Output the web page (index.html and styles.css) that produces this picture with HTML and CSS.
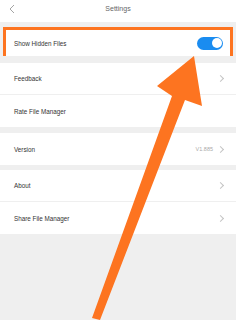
FILE: index.html
```html
<!DOCTYPE html>
<html>
<head>
<meta charset="utf-8">
<link rel="stylesheet" href="styles.css">
</head>
<body>
<div class="page">
  <header class="topbar">
    <svg class="back" width="6" height="10" viewBox="0 0 6 10"><path d="M5 1 L1 5 L5 9" fill="none" stroke="#9a9a9a" stroke-width="0.9"/></svg>
    <span class="title">Settings</span>
  </header>

  <section class="group first">
    <div class="row highlight">
      <span class="label">Show Hidden Files</span>
      <span class="toggle"><span class="knob"></span></span>
    </div>
  </section>

  <section class="group">
    <div class="row">
      <span class="label">Feedback</span>
      <span class="chev"></span>
    </div>
    <div class="row">
      <span class="label">Rate File Manager</span>
    </div>
  </section>

  <section class="group wide-gap">
    <div class="row">
      <span class="label">Version</span>
      <span class="right"><span class="value">V1.885</span><span class="chev"></span></span>
    </div>
  </section>

  <section class="group">
    <div class="row">
      <span class="label">About</span>
      <span class="chev"></span>
    </div>
    <div class="row">
      <span class="label">Share File Manager</span>
      <span class="chev"></span>
    </div>
  </section>

  <svg class="arrow" width="236" height="320" viewBox="0 0 236 320">
    <polygon points="92,318 100,320 185,100 202,106 194,56 157,86 172,96" fill="#fd7420"/>
  </svg>
</div>
</body>
</html>
```

FILE: styles.css
```css
* { box-sizing: border-box; }
html, body { margin: 0; padding: 0; }
body {
  width: 236px;
  height: 320px;
  overflow: hidden;
  background: #efefef;
  font-family: "Liberation Sans", Arial, sans-serif;
}
.page {
  position: relative;
  width: 236px;
  height: 320px;
  background: #efefef;
}
.topbar {
  height: 22px;
  background: #fff;
  display: flex;
  align-items: center;
  justify-content: center;
  position: relative;
}
.back {
  position: absolute;
  left: 9px;
  top: 4px;
}
.title {
  font-size: 7px;
  color: #666;
  margin-top: -5px;
}
.group {
  background: #fff;
  margin-top: 5px;
}
.group.wide-gap { margin-top: 6px; }
.group.first {
  background: transparent;
  margin-top: 5px;
  margin-bottom: 7px;
}
.row {
  height: 32px;
  display: flex;
  align-items: center;
  justify-content: space-between;
  padding: 0 12px 0 14px;
  border-bottom: 1px solid #efefef;
}
.group .row:last-child { border-bottom: none; }
.row.highlight {
  height: 29px;
  margin: 0 3px;
  border: 3.5px solid #fd7420;
  background: #fff;
  padding: 0 7px 0 8px;
}
.label {
  font-size: 6.3px;
  color: #333;
}
.toggle {
  width: 26px;
  height: 13px;
  border-radius: 7px;
  background: #1a8cf0;
  position: relative;
  display: block;
}
.knob {
  position: absolute;
  right: 1.5px;
  top: 1.5px;
  width: 10px;
  height: 10px;
  border-radius: 50%;
  background: #fff;
}
.right {
  display: flex;
  align-items: center;
  gap: 5px;
}
.value {
  font-size: 5.5px;
  color: #aaa;
}
.chev {
  width: 5px;
  height: 5px;
  border-top: 0.8px solid #c4c4c4;
  border-right: 0.8px solid #c4c4c4;
  transform: rotate(45deg);
  margin-right: 1px;
}
.arrow {
  position: absolute;
  left: 0;
  top: 0;
}
```
